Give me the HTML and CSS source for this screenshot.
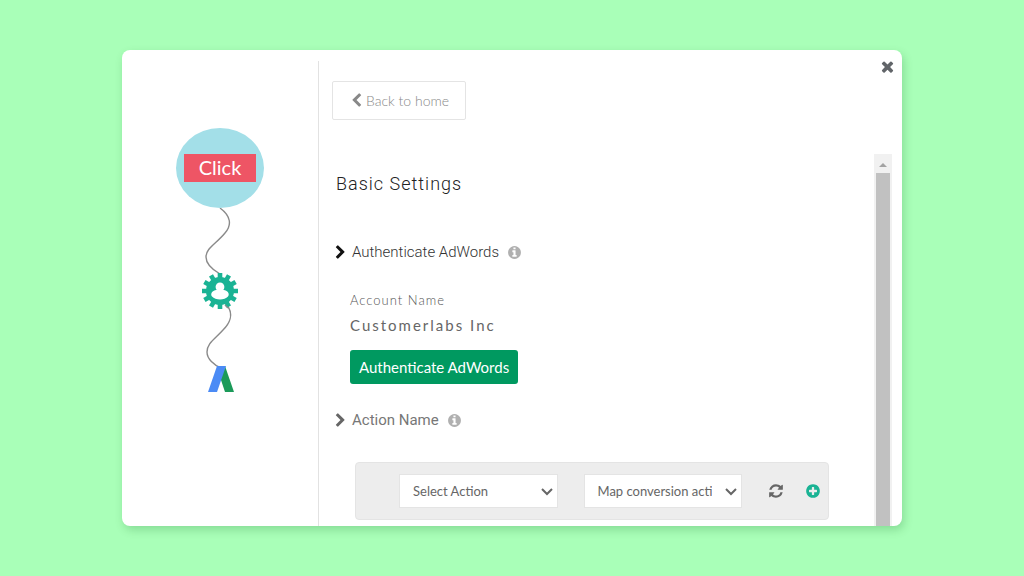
FILE: index.html
```html
<!DOCTYPE html>
<html lang="en">
<head>
    <meta charset="UTF-8">
    <meta name="viewport" content="width=device-width, initial-scale=1.0">
    <title>Basic Settings</title>
    <link rel="stylesheet" href="styles.css">
</head>
<body>
    <div class="modal">
        <aside class="flow">
            <svg class="flow-chart" width="90" height="270" viewBox="0 0 90 270">
                <path class="string" d="M45 82C56 90 57 99 50 107C41 118 31 122 31 131C31 139 38 144 45 148" />
                <path class="string" d="M51 178C60 188 54 198 48 204C40 213 32 217 32 226C32 233 39 239 46 242" />
                <ellipse cx="45" cy="42" rx="44" ry="40" fill="#a3dfe8" />
                <rect x="9" y="28" width="72" height="28" fill="#ee5565" />
                <text class="click-label" x="45" y="49" text-anchor="middle">Click</text>
                <!-- gear -->
                <g transform="translate(45 165)">
                    <circle r="14" fill="#1ab394" />
                    <g stroke="#1ab394" stroke-width="4.6" stroke-linejoin="round">
                        <path d="M0 -18V18M-18 0H18" />
                        <path d="M0 -18V18M-18 0H18" transform="rotate(30)" />
                        <path d="M0 -18V18M-18 0H18" transform="rotate(60)" />
                    </g>
                    <ellipse cy="-4" rx="4.4" ry="4.6" fill="#fff" />
                    <path d="M-4 -1C-9 0 -9.500 4 -8 5.500C-4.500 9.500 4.500 9.500 8 5.500C9.500 4 9 0 4 -1Z" fill="#fff" />
                </g>
                <path class="string" d="M50 179L53 182" />
                <!-- adwords logo -->
                <path d="M42 240H50L59 266H50L44 248Z" fill="#1b9a59" />
                <path d="M42 240H51L42 266H33Z" fill="#4b8bf5" />
            </svg>
        </aside>
        <main class="settings">
            <header class="top">
                <button class="back" type="button">
                    <svg width="15" height="15" viewBox="0 0 1792 1792"><path d="M1427 301l-531 531 531 531q19 19 19 45t-19 45l-166 166q-19 19-45 19t-45-19l-742-742q-19-19-19-45t19-45l742-742q19-19 45-19t45 19l166 166q19 19 19 45t-19 45z"/></svg>
                    Back to home
                </button>
                <button class="close" type="button" aria-label="Close">
                    <svg width="17" height="17" viewBox="0 0 1792 1792"><path d="M1490 1322q0 40-28 68l-136 136q-28 28-68 28t-68-28l-294-294-294 294q-28 28-68 28t-68-28l-136-136q-28-28-28-68t28-68l294-294-294-294q-28-28-28-68t28-68l136-136q28-28 68-28t68 28l294 294 294-294q28-28 68-28t68 28l136 136q28 28 28 68t-28 68l-294 294 294 294q28 28 28 68z"/></svg>
                </button>
            </header>
            <div class="scroll-area">
                <div class="content">
                    <h1>Basic Settings</h1>
                    <h2 class="step active">
                        <svg class="chevron" width="15" height="15" viewBox="0 0 1792 1792"><path d="M1363 877l-742 742q-19 19-45 19t-45-19l-166-166q-19-19-19-45t19-45l531-531-531-531q-19-19-19-45t19-45l166-166q19-19 45-19t45 19l742 742q19 19 19 45t-19 45z"/></svg>
                        Authenticate AdWords
                        <svg class="info" width="15" height="15" viewBox="0 0 1792 1792"><path d="M1152 1376v-160q0-14-9-23t-23-9h-96v-512q0-14-9-23t-23-9h-320q-14 0-23 9t-9 23v160q0 14 9 23t23 9h96v320h-96q-14 0-23 9t-9 23v160q0 14 9 23t23 9h448q14 0 23-9t9-23zm-128-896v-160q0-14-9-23t-23-9h-192q-14 0-23 9t-9 23v160q0 14 9 23t23 9h192q14 0 23-9t9-23zm640 416q0 209-103 385.5t-279.5 279.5-385.5 103-385.5-103-279.5-279.5-103-385.5 103-385.5 279.5-279.5 385.5-103 385.5 103 279.5 279.5 103 385.5z"/></svg>
                    </h2>
                    <div class="account">
                        <p class="account-label">Account Name</p>
                        <p class="account-name">Customerlabs Inc</p>
                        <button class="auth" type="button">Authenticate AdWords</button>
                    </div>
                    <h2 class="step">
                        <svg class="chevron" width="15" height="15" viewBox="0 0 1792 1792"><path d="M1363 877l-742 742q-19 19-45 19t-45-19l-166-166q-19-19-19-45t19-45l531-531-531-531q-19-19-19-45t19-45l166-166q19-19 45-19t45 19l742 742q19 19 19 45t-19 45z"/></svg>
                        Action Name
                        <svg class="info" width="15" height="15" viewBox="0 0 1792 1792"><path d="M1152 1376v-160q0-14-9-23t-23-9h-96v-512q0-14-9-23t-23-9h-320q-14 0-23 9t-9 23v160q0 14 9 23t23 9h96v320h-96q-14 0-23 9t-9 23v160q0 14 9 23t23 9h448q14 0 23-9t9-23zm-128-896v-160q0-14-9-23t-23-9h-192q-14 0-23 9t-9 23v160q0 14 9 23t23 9h192q14 0 23-9t9-23zm640 416q0 209-103 385.5t-279.5 279.5-385.5 103-385.5-103-279.5-279.5-103-385.5 103-385.5 279.5-279.5 385.5-103 385.5 103 279.5 279.5 103 385.5z"/></svg>
                    </h2>
                    <div class="mapping">
                        <div class="select-box">
                            <select aria-label="Action">
                                <option>Select Action</option>
                            </select>
                            <svg width="12" height="8" viewBox="0 0 12 8"><path d="M1 1L6 6L11 1" /></svg>
                        </div>
                        <div class="select-box">
                            <select aria-label="Conversion action">
                                <option>Map conversion action</option>
                            </select>
                            <svg width="12" height="8" viewBox="0 0 12 8"><path d="M1 1L6 6L11 1" /></svg>
                        </div>
                        <div class="tools">
                            <button class="refresh" type="button" aria-label="Refresh">
                                <svg width="16" height="16" viewBox="0 0 1792 1792"><path d="M1639 1056q0 5-1 7-64 268-268 434.5t-478 166.5q-146 0-282.5-55t-243.5-157l-129 129q-19 19-45 19t-45-19-19-45v-448q0-26 19-45t45-19h448q26 0 45 19t19 45-19 45l-137 137q71 66 161 102t187 36q134 0 250-65t186-179q11-17 53-117 8-23 30-23h192q13 0 22.5 9.5t9.5 22.5zm25-800v448q0 26-19 45t-45 19h-448q-26 0-45-19t-19-45 19-45l138-138q-148-137-349-137-134 0-250 65t-186 179q-11 17-53 117-8 23-30 23h-199q-13 0-22.5-9.5t-9.5-22.5v-7q65-268 270-434.5t480-166.5q146 0 284 55.5t245 156.5l130-129q19-19 45-19t45 19 19 45z"/></svg>
                            </button>
                            <button class="add" type="button" aria-label="Add">
                                <svg width="16" height="16" viewBox="0 0 1792 1792"><path d="M1344 960v-128q0-26-19-45t-45-19h-256v-256q0-26-19-45t-45-19h-128q-26 0-45 19t-19 45v256h-256q-26 0-45 19t-19 45v128q0 26 19 45t45 19h256v256q0 26 19 45t45 19h128q26 0 45-19t19-45v-256h256q26 0 45-19t19-45zm320-64q0 209-103 385.5t-279.5 279.5-385.5 103-385.5-103-279.5-279.5-103-385.5 103-385.5 279.5-279.5 385.5-103 385.5 103 279.5 279.5 103 385.5z"/></svg>
                            </button>
                        </div>
                    </div>
                </div>
                <div class="scrollbar">
                    <svg width="10" height="6" viewBox="0 0 10 6"><path d="M1 5L5 1L9 5Z" /></svg>
                    <div class="thumb"></div>
                </div>
            </div>
        </main>
    </div>
</body>
</html>
```

FILE: styles.css
```css
* {
    box-sizing: border-box;
}
body {
    background-color: #a9ffb8;
    font-family: Lato, "Liberation Sans", sans-serif;
    margin: 0;
    padding: 50px 122px;
}
h1, h2, p {
    margin: 0;
}
button {
    background: none;
    border: none;
    padding: 0;
    font-family: inherit;
    cursor: pointer;
}
svg {
    display: block;
    flex: none;
    fill: currentColor;
}
.modal {
    display: flex;
    min-height: calc(100vh - 100px);
    background-color: #fff;
    border-radius: 8px;
    box-shadow: 2px 4px 10px rgba(0, 80, 20, 0.2);
    padding-top: 11px;
}
.flow {
    width: 197px;
    border-right: 1px solid #e2e2e2;
    padding-top: 65px;
}
.flow-chart {
    margin: 0 auto;
}
.string {
    fill: none;
    stroke: #8a8a8a;
    stroke-width: 1.4;
}
.click-label {
    fill: #fff;
    font-size: 20px;
}
.settings {
    flex: 1;
    display: flex;
    flex-direction: column;
}
.top {
    display: flex;
    justify-content: space-between;
    align-items: flex-start;
    padding: 0 6px 0 13px;
}
.back {
    display: flex;
    align-items: center;
    gap: 2px;
    height: 39px;
    margin-top: 20px;
    padding: 0 16px;
    border: 1px solid #e4e4e4;
    border-radius: 2px;
    color: #888;
    font-size: 14px;
    font-weight: 300;
}
.close {
    color: #616569;
    margin-top: -3px;
}

/* scrolling part */
.scroll-area {
    flex: 1;
    display: flex;
    margin-top: 34px;
}
.content {
    flex: 1;
    padding: 18px 45px 4px 17px;
}
h1 {
    font: 300 18px/24px Roboto, sans-serif;
    letter-spacing: 1px;
    color: #222;
    margin-bottom: 46px;
}
.step {
    display: flex;
    align-items: center;
    gap: 4px;
    margin-left: -3px;
    font: 400 15px/20px Roboto, sans-serif;
    color: #777;
}
.step.active {
    font-weight: 300;
    color: #333;
}
.chevron {
    color: #666;
}
.active .chevron {
    color: #111;
}
.info {
    color: #b0b0b0;
    margin-left: 4px;
}
.account {
    padding: 28px 14px 26px;
}
.account-label {
    font-size: 13px;
    font-weight: 300;
    line-height: 20px;
    letter-spacing: 1px;
    color: #555;
}
.account-name {
    font-size: 15px;
    line-height: 20px;
    letter-spacing: 2px;
    color: #666;
    margin: 5px 0 15px;
}
.auth {
    height: 34px;
    padding: 0 9px;
    border-radius: 3px;
    background-color: #009960;
    color: #fff;
    font-size: 15px;
}
.mapping {
    display: flex;
    align-items: center;
    gap: 26px;
    height: 58px;
    margin: 32px 0 0 19px;
    padding: 0 7px 0 43px;
    background-color: #ededed;
    border: 1px solid #e4e4e4;
    border-radius: 4px;
}
.select-box {
    position: relative;
    flex: 1;
}
.select-box select {
    appearance: none;
    display: block;
    width: 100%;
    height: 34px;
    padding: 0 29px 0 13px;
    border: 1px solid #e4e4e4;
    border-radius: 0;
    background-color: #fff;
    color: #666;
    font: 400 13px Lato, sans-serif;
}
.select-box svg {
    position: absolute;
    right: 5px;
    top: 14px;
    fill: none;
    stroke: #666;
    stroke-width: 2;
    pointer-events: none;
}
.tools {
    display: flex;
    gap: 21px;
}
.refresh {
    color: #666;
}
.add {
    color: #1ab394;
}
.scrollbar {
    width: 18px;
    display: flex;
    flex-direction: column;
    align-items: center;
    margin-right: 10px;
    padding-top: 8px;
    background-color: #f1f1f1;
    color: #a3a3a3;
}
.thumb {
    flex: 1;
    width: 14px;
    margin-top: 5px;
    background-color: #c1c1c1;
}
```
